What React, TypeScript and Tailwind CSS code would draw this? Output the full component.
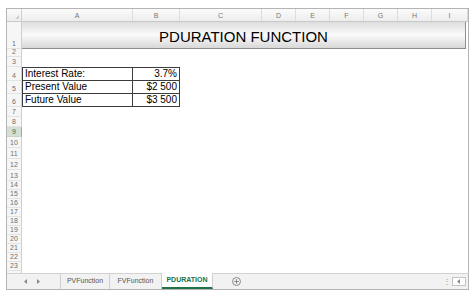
import { Plus } from 'lucide-react'

const columns = [
  { label: 'A', w: 'w-[111px]' },
  { label: 'B', w: 'w-[47px]' },
  { label: 'C', w: 'w-[82px]' },
  { label: 'D', w: 'w-[34px]' },
  { label: 'E', w: 'w-[34px]' },
  { label: 'F', w: 'w-[34px]' },
  { label: 'G', w: 'w-[34px]' },
  { label: 'H', w: 'w-[34px]' },
  { label: 'I', w: 'flex-1' },
]

// empty rows below the table: number + height class
const emptyRows = [
  { n: 7, h: 'h-[10px]' },
  { n: 8, h: 'h-[10px]' },
  { n: 9, h: 'h-[10px]', selected: true },
  { n: 10, h: 'h-[11px]' },
  { n: 11, h: 'h-[11px]' },
  { n: 12, h: 'h-[11px]' },
  { n: 13, h: 'h-[11px]' },
  { n: 14, h: 'h-[9px]' },
  { n: 15, h: 'h-[9px]' },
  { n: 16, h: 'h-[9px]' },
  { n: 17, h: 'h-[9px]' },
  { n: 18, h: 'h-[9px]' },
  { n: 19, h: 'h-[9px]' },
  { n: 20, h: 'h-[9px]' },
  { n: 21, h: 'h-[9px]' },
  { n: 22, h: 'h-[9px]' },
  { n: 23, h: 'h-[9px]' },
]

const tableRows = [
  { n: 4, label: 'Interest Rate:', value: '3.7%', h: 'h-[14px]' },
  { n: 5, label: 'Present Value', value: '$2 500', h: 'h-[13px]' },
  { n: 6, label: 'Future Value', value: '$3 500', h: 'h-[13px]' },
]

function RowHeader({ n, selected }: { n: number; selected?: boolean }) {
  return (
    <div
      className={`w-[15px] shrink-0 h-full flex items-end justify-center overflow-hidden border-r border-b text-[7px] leading-[9px] ${
        selected
          ? 'bg-[#d4dfd6] border-r-[#8fb39a] border-b-[#c9d6cc] text-[#3d6b4b]'
          : 'bg-[#f6f6f6] border-r-[#cfcfcf] border-b-[#e3e3e3] text-[#6f6f6f]'
      }`}
    >
      {n}
    </div>
  )
}

function Arrow({ dir }: { dir: 'left' | 'right' }) {
  return (
    <svg width="3" height="5" viewBox="0 0 3 5">
      <polygon points={dir === 'left' ? '3,0 3,5 0,2.5' : '0,0 0,5 3,2.5'} fill="#8a8a8a" />
    </svg>
  )
}

export default function App() {
  return (
    <div className="w-[474px] h-[297px] bg-white pt-[8px] pl-[6px] font-['Liberation_Sans',Arial,sans-serif]">
      <div className="w-[463px] h-[282px] border border-[#b4b4b4] flex flex-col overflow-hidden">
        {/* column headers */}
        <div className="h-[13px] shrink-0 flex bg-gradient-to-b from-[#fbfbfb] to-[#ededed] border-b border-[#c9c9c9]">
          <div className="w-[15px] shrink-0 border-r border-[#d0d0d0] relative">
            <div className="absolute right-[2px] bottom-[2px] w-0 h-0 border-l-[4px] border-l-transparent border-b-[4px] border-b-[#cfcfcf]" />
          </div>
          {columns.map((c) => (
            <div
              key={c.label}
              className={`${c.w} shrink-0 border-r border-[#dcdcdc] flex items-end justify-center pb-[1px] text-[7px] leading-[8px] text-[#777]`}
            >
              {c.label}
            </div>
          ))}
        </div>

        {/* row 1: title band */}
        <div className="h-[27px] shrink-0 flex">
          <RowHeader n={1} />
          <div className="flex-1 mr-[2px] flex items-center justify-center pt-[2px] bg-gradient-to-b from-[#dedede] via-[#fafafa] to-[#d8d8d8] border-b border-r border-[#8e8e8e] text-[15px] leading-none text-black">
            PDURATION FUNCTION
          </div>
        </div>

        {/* rows 2–3 */}
        <div className="h-[8px] shrink-0 flex">
          <RowHeader n={2} />
        </div>
        <div className="h-[10px] shrink-0 flex">
          <RowHeader n={3} />
        </div>

        {/* table rows 4–6 */}
        {tableRows.map((r) => (
          <div key={r.n} className={`${r.h} shrink-0 flex`}>
            <RowHeader n={r.n} />
            <div
              className={`w-[111px] shrink-0 border-l border-r border-b border-[#3c3c3c] ${
                r.n === 4 ? 'border-t' : ''
              } flex items-center pl-[2px] text-[10px] leading-none text-black`}
            >
              {r.label}
            </div>
            <div
              className={`w-[47px] shrink-0 border-r border-b border-[#3c3c3c] ${
                r.n === 4 ? 'border-t' : ''
              } flex items-center justify-end pr-[2px] text-[10px] leading-none text-black`}
            >
              {r.value}
            </div>
          </div>
        ))}

        {/* empty rows */}
        {emptyRows.map((r) => (
          <div key={r.n} className={`${r.h} shrink-0 flex`}>
            <RowHeader n={r.n} selected={r.selected} />
          </div>
        ))}
        {/* row 24, only a sliver visible */}
        <div className="h-[2px] shrink-0 flex">
          <div className="w-[15px] shrink-0 h-full bg-[#f6f6f6] border-r border-[#cfcfcf]" />
        </div>

        {/* sheet tab bar */}
        <div className="h-[16px] shrink-0 flex items-stretch bg-[#f2f2f2] border-t border-[#d2d2d2] text-[7px] text-[#555]">
          <div className="w-[54px] flex items-center gap-[10px] pl-[17px] border-r border-[#cfcfcf]">
            <Arrow dir="left" />
            <Arrow dir="right" />
          </div>
          <div className="w-[49px] flex items-center justify-center border-r border-[#cfcfcf]">PVFunction</div>
          <div className="w-[52px] flex items-center justify-center border-r border-[#cfcfcf]">FVFunction</div>
          <div className="w-[51px] flex items-center justify-center bg-white border-r border-[#cfcfcf] border-b-2 border-b-[#217346] font-bold text-[#217346] -mt-px">
            PDURATION
          </div>
          <div className="w-[46px] flex items-center justify-center">
            <span className="w-[9px] h-[9px] rounded-full border border-[#8a8a8a] flex items-center justify-center">
              <Plus size={7} strokeWidth={2.5} color="#6a6a6a" />
            </span>
          </div>
          <div className="flex-1" />
          <div className="w-[10px] flex items-center justify-center text-[8px] text-[#9a9a9a]">⋮</div>
          <div className="w-[16px] flex items-center">
            <div className="w-[14px] h-[9px] border border-[#c4c4c4] bg-white flex items-center pl-[4px]">
              <Arrow dir="left" />
            </div>
          </div>
        </div>
      </div>
    </div>
  )
}
